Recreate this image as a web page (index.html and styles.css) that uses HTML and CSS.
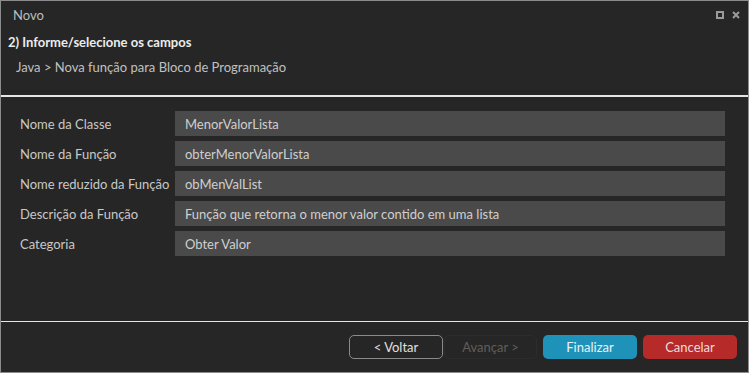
FILE: index.html
```html
<!DOCTYPE html>
<html lang="pt">
<head>
<meta charset="utf-8">
<title>Novo</title>
<link rel="stylesheet" href="styles.css">
</head>
<body>
<div class="window">
  <div class="titlebar">
    <span class="title">Novo</span>
    <div class="win-controls">
      <svg class="icon" width="8" height="8" viewBox="0 0 8 8"><rect x="1" y="1" width="6" height="6" fill="none" stroke="#9a9a9a" stroke-width="2"/></svg>
      <svg class="icon" width="8" height="8" viewBox="0 0 8 8"><path d="M1 1L7 7M7 1L1 7" stroke="#9a9a9a" stroke-width="2"/></svg>
    </div>
  </div>
  <div class="header">
    <div class="step">2) Informe/selecione os campos</div>
    <div class="crumb">Java &gt; Nova função para Bloco de Programação</div>
  </div>
  <div class="sep-thick"></div>
  <div class="form">
    <div class="row"><label class="lbl">Nome da Classe</label><div class="field">MenorValorLista</div></div>
    <div class="row"><label class="lbl">Nome da Função</label><div class="field">obterMenorValorLista</div></div>
    <div class="row"><label class="lbl">Nome reduzido da Função</label><div class="field">obMenValList</div></div>
    <div class="row"><label class="lbl">Descrição da Função</label><div class="field">Função que retorna o menor valor contido em uma lista</div></div>
    <div class="row"><label class="lbl">Categoria</label><div class="field">Obter Valor</div></div>
  </div>
  <div class="sep-thin"></div>
  <div class="footer">
    <button class="btn btn-outline">&lt; Voltar</button>
    <button class="btn btn-disabled">Avançar &gt;</button>
    <button class="btn btn-primary">Finalizar</button>
    <button class="btn btn-danger">Cancelar</button>
  </div>
</div>
</body>
</html>
```
FILE: styles.css
```css
* { box-sizing: border-box; }
html, body { margin: 0; padding: 0; background: #262626; }
body { font-family: Lato, "Noto Sans", sans-serif; font-size: 13px; color: #c8c8c8; }
.window {
  width: 749px; height: 373px;
  border: 1px solid #8c8c8c;
  background: #262626;
  display: flex; flex-direction: column;
}
.titlebar {
  height: 27px; display: flex; align-items: center; justify-content: space-between;
  padding: 0 8px 0 12px;
}
.title { color: #bdbdbd; font-size: 13px; }
.win-controls { display: flex; gap: 8px; align-items: center; }
.icon { display: block; }
.header { padding: 0 0 0 7px; }
.step { font-weight: bold; color: #ececec; font-size: 13px; line-height: 16px; margin-top: 6px; }
.crumb { color: #c0c0c0; font-size: 13px; line-height: 16px; margin-top: 9px; padding-left: 8px; }
.sep-thick { height: 2px; background: #e6e6e6; margin-top: 20px; }
.form { padding: 14px 23px 0 19px; display: flex; flex-direction: column; gap: 5px; flex: 1; }
.row { display: flex; align-items: center; height: 25px; }
.lbl { width: 155px; color: #c8c8c8; font-size: 13px; }
.field {
  flex: 1; height: 25px; background: #4a4a4a; color: #cfcfcf;
  padding: 0 10px; display: flex; align-items: center; font-size: 13px;
}
.sep-thin { height: 1px; background: #e6e6e6; }
.footer { height: 50px; display: flex; justify-content: flex-end; align-items: flex-start; padding: 13px 11px 0 0; gap: 0; }
.btn {
  font-family: inherit; font-size: 13px; width: 94px; height: 24px;
  border-radius: 5px; border: 1px solid transparent; background: none; color: #e0e0e0;
  padding: 0; margin-left: 6px;
}
.btn-outline { border-color: #8a8a8a; color: #e0e0e0; }
.btn-disabled { margin-left: 1px; color: #5e5e5e; border-color: #2c2c2c; width: 93px; }
.btn-primary { background: #1f92b9; color: #e6f2f6; }
.btn-danger { background: #b72a2a; color: #f0dcdc; }
```
